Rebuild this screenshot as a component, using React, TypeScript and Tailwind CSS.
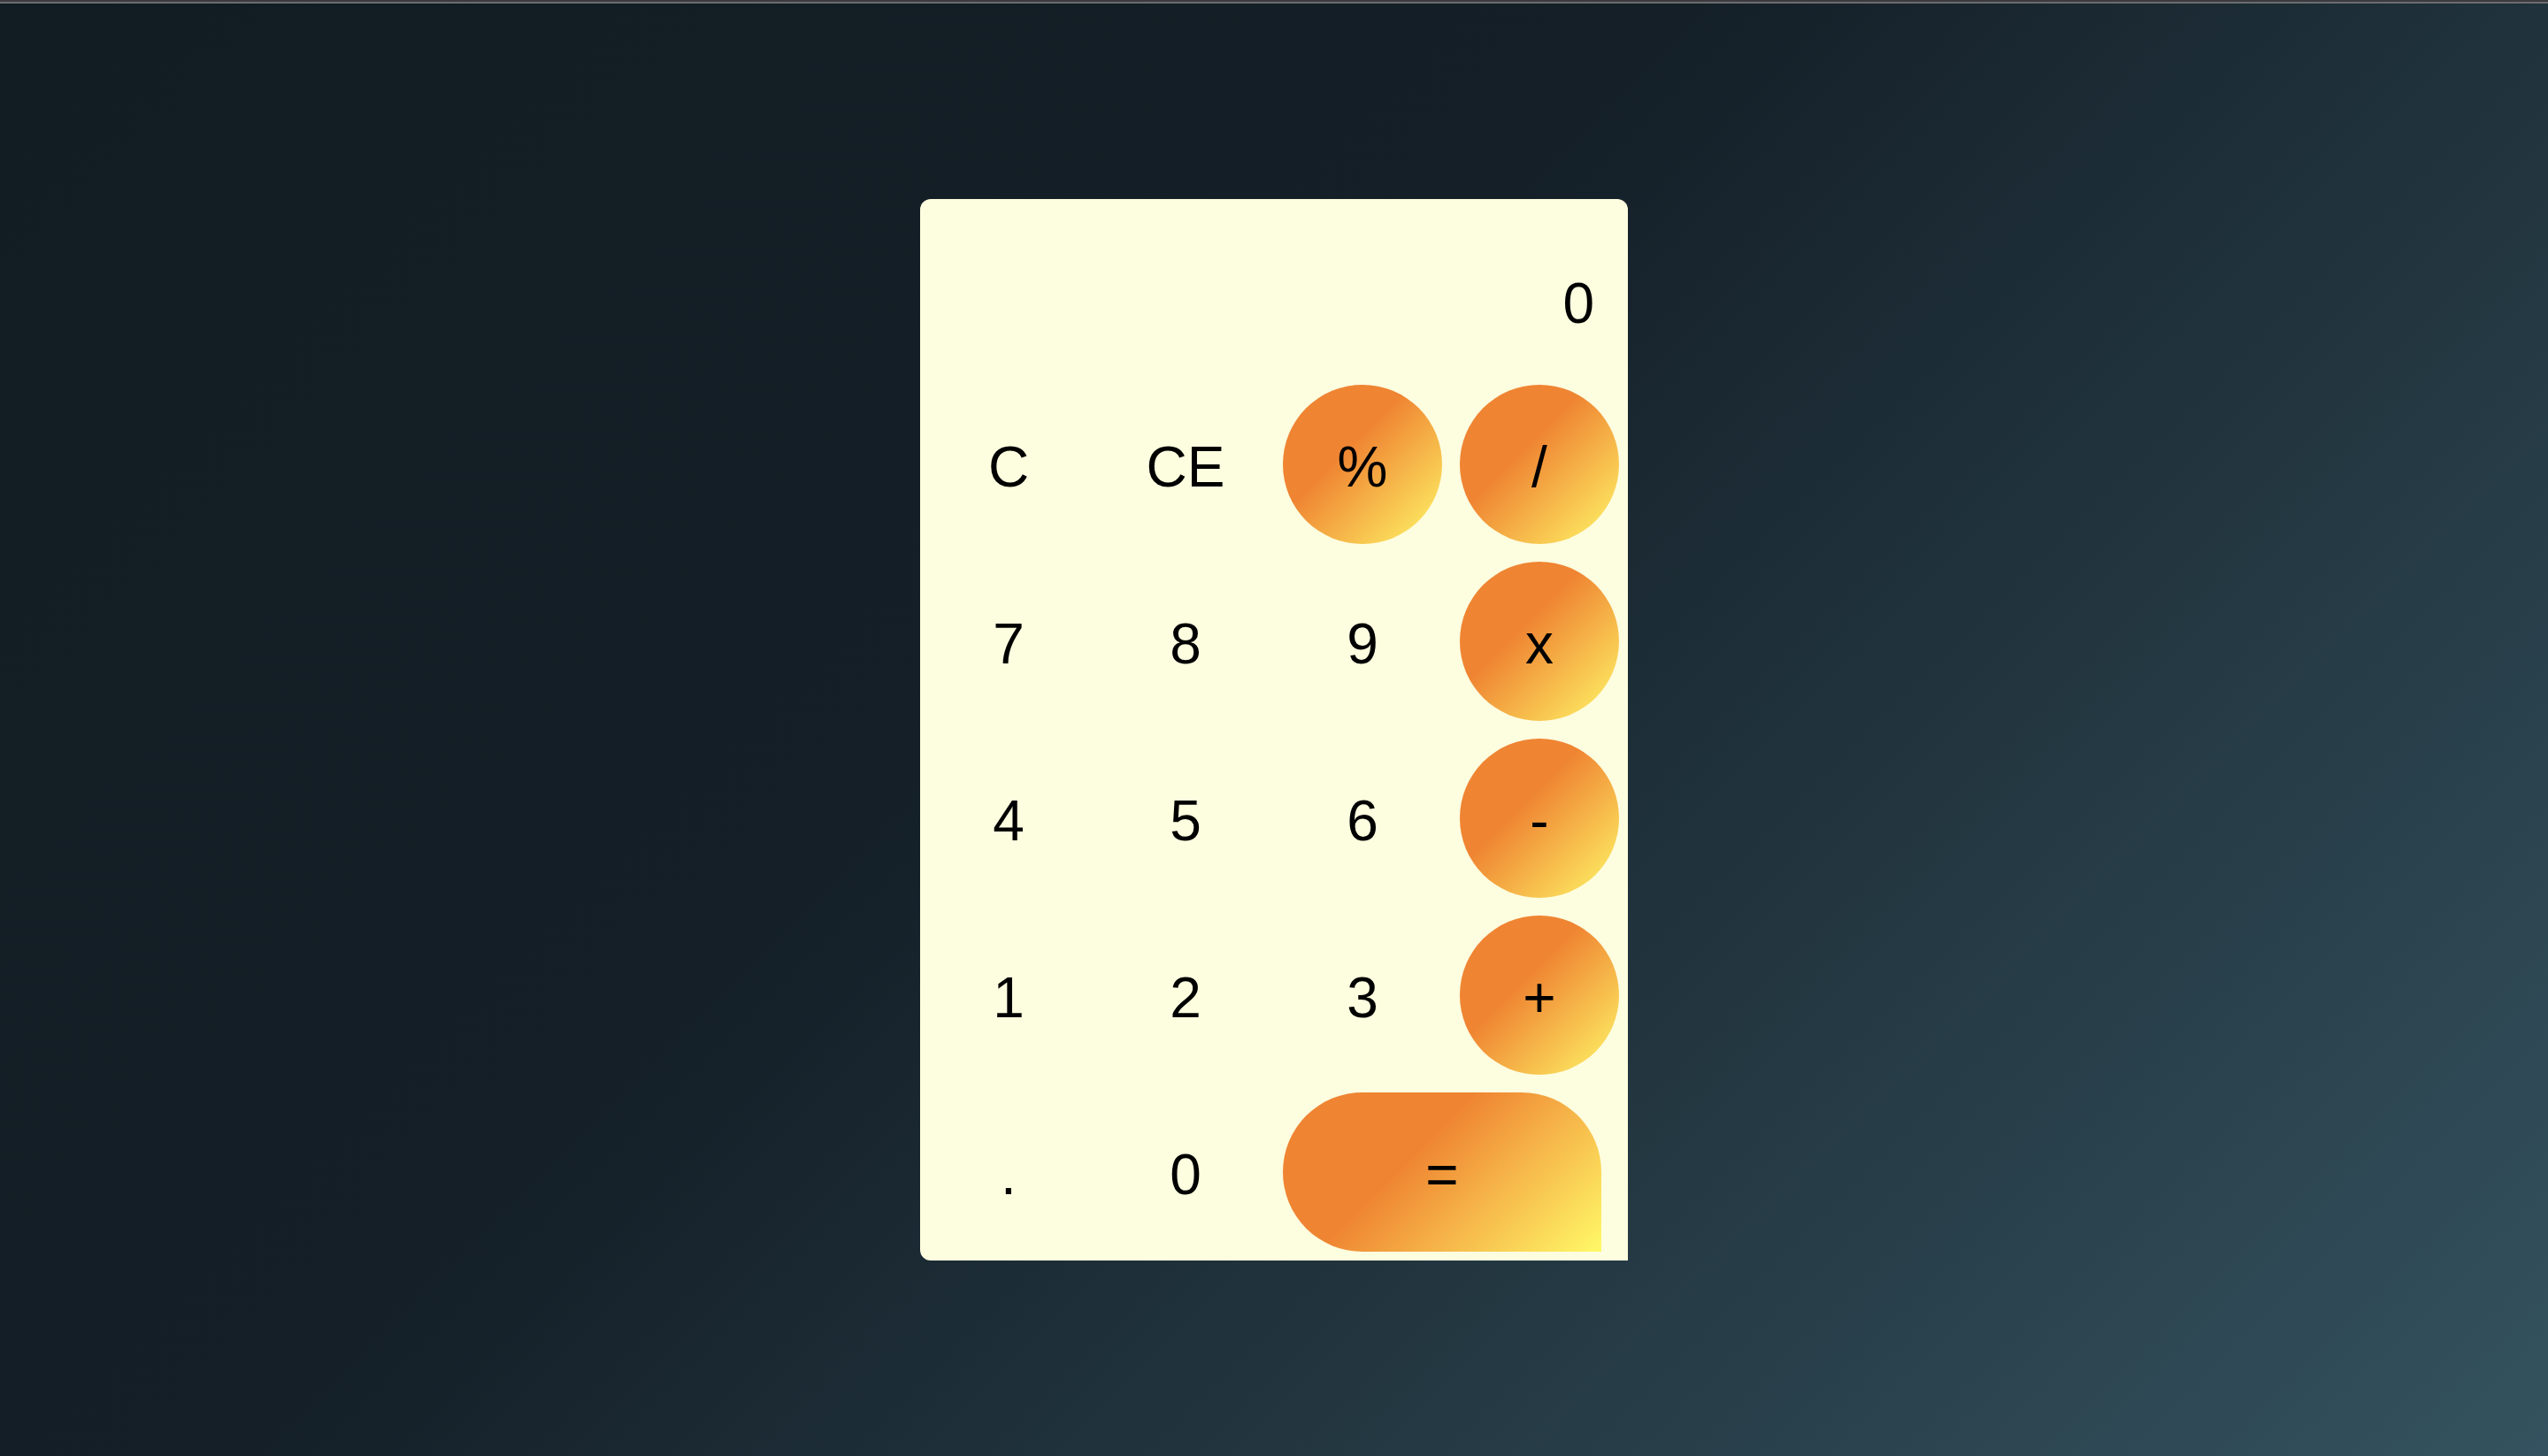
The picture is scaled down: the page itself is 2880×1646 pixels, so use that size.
import React, { useState } from 'react'

// ==========================================
// TIPOS
// ==========================================
type KeyKind = 'plain' | 'op' | 'equals'

interface CalcKey {
  label: string
  kind: KeyKind
}

const keys: CalcKey[] = [
  { label: 'C', kind: 'plain' },
  { label: 'CE', kind: 'plain' },
  { label: '%', kind: 'op' },
  { label: '/', kind: 'op' },
  { label: '7', kind: 'plain' },
  { label: '8', kind: 'plain' },
  { label: '9', kind: 'plain' },
  { label: 'x', kind: 'op' },
  { label: '4', kind: 'plain' },
  { label: '5', kind: 'plain' },
  { label: '6', kind: 'plain' },
  { label: '-', kind: 'op' },
  { label: '1', kind: 'plain' },
  { label: '2', kind: 'plain' },
  { label: '3', kind: 'plain' },
  { label: '+', kind: 'op' },
  { label: '.', kind: 'plain' },
  { label: '0', kind: 'plain' },
  { label: '=', kind: 'equals' },
]

const gradient = 'bg-[linear-gradient(135deg,#ef8432_0%,#ef8432_40%,#fff968_100%)]'

// ==========================================
// BOTON
// ==========================================
const KeyButton: React.FC<{ k: CalcKey; onPress: (label: string) => void }> = ({ k, onPress }) => {
  if (k.kind === 'equals') {
    return (
      <div className="col-span-2 flex items-center pl-[10px]">
        <button
          onClick={() => onPress(k.label)}
          className={`flex h-[180px] w-[360px] items-center justify-center pt-[6px] rounded-[90px_90px_0_90px] ${gradient}`}
        >
          {k.label}
        </button>
      </div>
    )
  }

  return (
    <div className="flex items-center justify-center">
      <button
        onClick={() => onPress(k.label)}
        className={`flex h-[180px] w-[180px] items-center justify-center pt-[6px] rounded-full ${
          k.kind === 'op' ? gradient : 'bg-transparent'
        }`}
      >
        {k.label}
      </button>
    </div>
  )
}

// ==========================================
// APP
// ==========================================
export default function App() {
  const [display, setDisplay] = useState('0')

  const handlePress = (label: string) => {
    if (label === 'C' || label === 'CE') {
      setDisplay('0')
      return
    }
    if (label === '=') {
      try {
        const expr = display.replace(/x/g, '*')
        // eslint-disable-next-line no-new-func
        const result = Function(`return (${expr})`)()
        setDisplay(String(result))
      } catch {
        setDisplay('0')
      }
      return
    }
    setDisplay((prev) => (prev === '0' && label !== '.' ? label : prev + label))
  }

  return (
    <div className="flex h-screen flex-col bg-[linear-gradient(135deg,#111c23_0%,#141f27_42%,#34525f_100%)] font-['Liberation_Sans',Arial,sans-serif] text-black">
      {/* franja superior */}
      <div className="h-[2px] bg-[#3b3b3f]" />
      <div className="h-[2px] bg-[#6c6c6f]" />

      <div className="flex flex-1 items-center justify-center">
        <div className="w-[800px] h-[1200px] overflow-hidden rounded-tl-[12px] rounded-tr-[12px] rounded-bl-[12px] bg-[#fdfddf]">
          {/* Pantalla */}
          <div className="h-[200px] pt-[70px] pr-[38px] text-right text-[64px]">{display}</div>

          {/* Teclado */}
          <div className="grid grid-cols-4 auto-rows-[200px] text-[64px]">
            {keys.map((k) => (
              <KeyButton key={k.label} k={k} onPress={handlePress} />
            ))}
          </div>
        </div>
      </div>
    </div>
  )
}
